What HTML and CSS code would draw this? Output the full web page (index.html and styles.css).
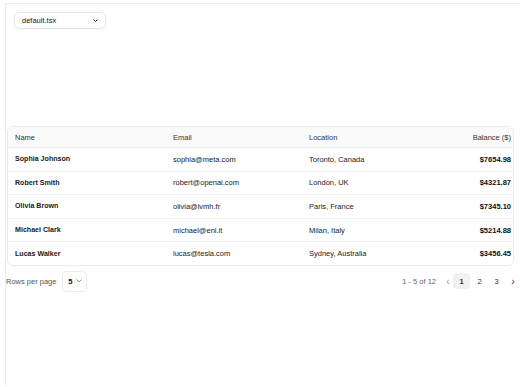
FILE: index.html
```html
<!DOCTYPE html>
<html>
<head>
<meta charset="utf-8">
<link rel="stylesheet" href="styles.css">
</head>
<body>
<div class="frame">
  <div class="toolbar">
    <div class="file-select">
      <span>default.tsx</span>
      <svg class="chev" width="5" height="4" viewBox="0 0 5 4"><path d="M0.9 1 L2.5 2.6 L4.1 1" fill="none" stroke="#222" stroke-width="1" stroke-linecap="round" stroke-linejoin="round"/></svg>
    </div>
  </div>
  <div class="card">
    <table class="table">
      <thead>
        <tr><th class="c-name">Name</th><th class="c-email">Email</th><th class="c-loc">Location</th><th class="c-bal">Balance ($)</th></tr>
      </thead>
      <tbody>
        <tr><td class="c-name">Sophia Johnson</td><td class="c-email">sophia@meta.com</td><td class="c-loc">Toronto, Canada</td><td class="c-bal">$7654.98</td></tr>
        <tr><td class="c-name">Robert Smith</td><td class="c-email">robert@openai.com</td><td class="c-loc">London, UK</td><td class="c-bal">$4321.87</td></tr>
        <tr><td class="c-name">Olivia Brown</td><td class="c-email">olivia@lvmh.fr</td><td class="c-loc">Paris, France</td><td class="c-bal">$7345.10</td></tr>
        <tr><td class="c-name">Michael Clark</td><td class="c-email">michael@eni.it</td><td class="c-loc">Milan, Italy</td><td class="c-bal">$5214.88</td></tr>
        <tr><td class="c-name">Lucas Walker</td><td class="c-email">lucas@tesla.com</td><td class="c-loc">Sydney, Australia</td><td class="c-bal">$3456.45</td></tr>
      </tbody>
    </table>
  </div>
  <div class="footer">
    <div class="rows">
      <span class="rows-label">Rows per page</span>
      <div class="rows-select"><span>5</span><svg width="6" height="4" viewBox="0 0 6 4"><path d="M0.8 0.8 L3 3 L5.2 0.8" fill="none" stroke="#888" stroke-width="0.9" stroke-linecap="round" stroke-linejoin="round"/></svg></div>
    </div>
    <div class="pager">
      <span class="range">1 - 5 of 12</span>
      <span class="arrow prev">&lsaquo;</span>
      <span class="page active">1</span>
      <span class="page">2</span>
      <span class="page">3</span>
      <span class="arrow next">&rsaquo;</span>
    </div>
  </div>
</div>
</body>
</html>
```
FILE: styles.css
```css
html, body {
  margin: 0;
  padding: 0;
  background: #fff;
}
body {
  font-family: "Liberation Sans", Arial, sans-serif;
  color: #111;
  font-size: 8px;
}
.frame {
  margin: 3px 0 0 5px;
  border-top: 1px solid #ededed;
  border-left: 1px solid #ededed;
  height: 383px;
  box-sizing: border-box;
}
.toolbar {
  padding: 8px 0 0 8px;
}
.file-select {
  width: 92px;
  height: 17px;
  box-sizing: border-box;
  border: 1px solid #e6e6e6;
  border-radius: 5px;
  display: flex;
  align-items: center;
  justify-content: space-between;
  padding: 0 7px 0 7px;
  font-size: 7.5px;
  color: #222;
  box-shadow: 0 1px 1px rgba(0,0,0,0.03);
}
.card {
  margin: 97px 0 0 1px;
  width: 507px;
  box-sizing: border-box;
  border: 1px solid #ececec;
  border-radius: 6px;
  overflow: hidden;
}
.table {
  width: 100%;
  border-collapse: collapse;
  font-size: 7.5px;
}
.table th {
  background: #fafafa;
  font-weight: normal;
  color: #333;
  height: 20px;
  text-align: left;
  border-bottom: 1px solid #efefef;
  padding: 0;
}
.table td {
  height: 22.6px;
  padding: 0;
  border-bottom: 1px solid #f0f0f0;
  color: #222;
}
.table tbody tr:last-child td {
  border-bottom: none;
}
.c-name { padding-left: 7px !important; width: 158px; }
.c-email { width: 136px; }
.c-loc { width: 130px; }
.c-bal { text-align: right !important; padding-right: 2px !important; }
td.c-name { font-weight: bold; color: #1a1a1a; font-size: 7.1px; }
td.c-bal { font-weight: bold; color: #111; }
.footer {
  display: flex;
  justify-content: space-between;
  align-items: center;
  margin-top: 5px;
  width: 511px;
}
.rows {
  display: flex;
  align-items: center;
}
.rows-label {
  color: #555;
  font-size: 7.5px;
}
.rows-select {
  margin-left: 6px;
  width: 25px;
  height: 21px;
  box-sizing: border-box;
  border: 1px solid #ececec;
  border-radius: 4px;
  display: flex;
  align-items: center;
  justify-content: center;
  gap: 3px;
  font-weight: bold;
  font-size: 7.5px;
}
.pager {
  display: flex;
  align-items: center;
  font-size: 7.5px;
  color: #333;
}
.range {
  color: #666;
  margin-right: 8px;
}
.arrow {
  font-size: 10px;
  color: #999;
  width: 8px;
  text-align: center;
}
.arrow.next { color: #333; margin-left: 4px; }
.page {
  width: 17px;
  height: 16px;
  display: flex;
  align-items: center;
  justify-content: center;
  border-radius: 4px;
}
.page.active {
  background: #f1f1f1;
  font-weight: bold;
  margin: 0 1px 0 1px;
}
```
